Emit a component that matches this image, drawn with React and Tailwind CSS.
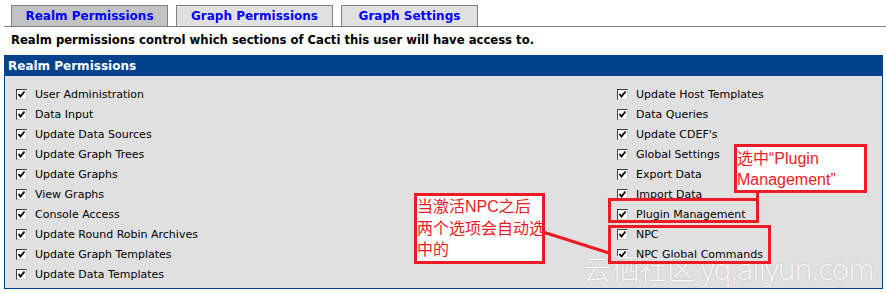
import React from "react";

const left = [
  "User Administration",
  "Data Input",
  "Update Data Sources",
  "Update Graph Trees",
  "Update Graphs",
  "View Graphs",
  "Console Access",
  "Update Round Robin Archives",
  "Update Graph Templates",
  "Update Data Templates",
];
const right = [
  "Update Host Templates",
  "Data Queries",
  "Update CDEF's",
  "Global Settings",
  "Export Data",
  "Import Data",
  "Plugin Management",
  "NPC",
  "NPC Global Commands",
];

function Check() {
  return (
    <span className="w-[11px] h-[11px] shrink-0 bg-white border border-t-[#404040] border-l-[#404040] border-r-[#d4d0c8] border-b-[#d4d0c8] flex items-center justify-center">
      <svg width="9" height="9" viewBox="0 0 9 9">
        <path d="M1.5 4 L3.5 6.5 L7.5 1.5" stroke="#000" strokeWidth="1.8" fill="none" />
      </svg>
    </span>
  );
}

function Row({ label }) {
  return (
    <div className="h-[20px] flex items-center gap-[8px]">
      <Check />
      <span className="text-[11px] text-black leading-none" style={{ fontFamily: '"DejaVu Sans", Verdana, sans-serif' }}>
        {label}
      </span>
    </div>
  );
}

export default function App() {
  const sans = { fontFamily: '"DejaVu Sans", Verdana, sans-serif' };
  const ann = { fontFamily: '"Liberation Sans", "Noto Sans CJK SC", Arial, sans-serif' };
  return (
    <div className="relative w-[886px] h-[293px] bg-white overflow-hidden" style={sans}>
      <div className="ml-[4px] pt-[5px] pl-[7px] flex gap-[8px] border-b border-[#808080]">
        <div className="w-[157px] h-[21px] bg-[#c3c3c3] border border-b-0 border-[#808080] flex items-center justify-center text-[12px] font-bold text-[#0000ff]">
          Realm Permissions
        </div>
        <div className="w-[157px] h-[21px] bg-[#e0e0e0] border border-b-0 border-[#808080] flex items-center justify-center text-[12px] font-bold text-[#0000ff]">
          Graph Permissions
        </div>
        <div className="w-[137px] h-[21px] bg-[#e0e0e0] border border-b-0 border-[#808080] flex items-center justify-center text-[12px] font-bold text-[#0000ff]">
          Graph Settings
        </div>
      </div>
      <div className="h-[28px] pl-[11px] flex items-center text-[11.65px] font-bold text-black">
        Realm permissions control which sections of Cacti this user will have access to.
      </div>
      <div className="ml-[4px] w-[879px] border-x border-b border-[#00438c]">
        <div className="h-[21px] bg-[#00438c] text-white text-[12px] font-bold flex items-center pl-[3px]">
          Realm Permissions
        </div>
        <div className="bg-[#e0e0e0] h-[212px] pt-[8px] pl-[11px] flex">
          <div className="w-[601px] flex flex-col">
            {left.map((l) => (
              <Row key={l} label={l} />
            ))}
          </div>
          <div className="flex flex-col">
            {right.map((l) => (
              <Row key={l} label={l} />
            ))}
          </div>
        </div>
      </div>

      {/* watermark */}
      <div
        className="absolute left-[583px] top-[251px] flex items-baseline gap-[6px] whitespace-nowrap text-white/90 pointer-events-none [text-shadow:0_0_2px_rgba(0,0,0,0.2)]"
      >
        <span className="text-[28px] leading-[34px]" style={{ fontFamily: '"Noto Sans CJK SC", sans-serif', fontWeight: 300 }}>
          云栖社区
        </span>
        <span className="text-[29px] leading-[34px] tracking-[-0.3px]" style={{ fontFamily: '"Open Sans", sans-serif', fontWeight: 300 }}>
          yq.aliyun.com
        </span>
      </div>

      {/* annotations */}
      <svg className="absolute inset-0 pointer-events-none" width="886" height="293">
        <line x1="543" y1="232" x2="609" y2="253" stroke="#ed1c24" strokeWidth="3" />
        <line x1="757.5" y1="190" x2="757.5" y2="200" stroke="#ed1c24" strokeWidth="3" />
      </svg>
      <div className="absolute left-[608px] top-[198px] w-[151px] h-[25px] border-[3px] border-[#ed1c24]" />
      <div className="absolute left-[608px] top-[225px] w-[163px] h-[39px] border-[3px] border-[#ed1c24]" />
      <div
        className="absolute left-[734px] top-[144px] w-[133px] h-[49px] border-[3px] border-[#ed1c24] bg-white text-[#ed1c24] text-[16px] leading-[21px] pt-[1px] whitespace-nowrap"
        style={ann}
      >
        选中“Plugin
        <br />
        Management”
      </div>
      <div
        className="absolute left-[414px] top-[193px] w-[131px] h-[71px] border-[3px] border-[#ed1c24] bg-white text-[#ed1c24] text-[16px] leading-[21.5px] whitespace-nowrap"
        style={ann}
      >
        <div>当激活NPC之后</div>
        <div>两个选项会自动选</div>
        <div>中的</div>
      </div>
    </div>
  );
}
